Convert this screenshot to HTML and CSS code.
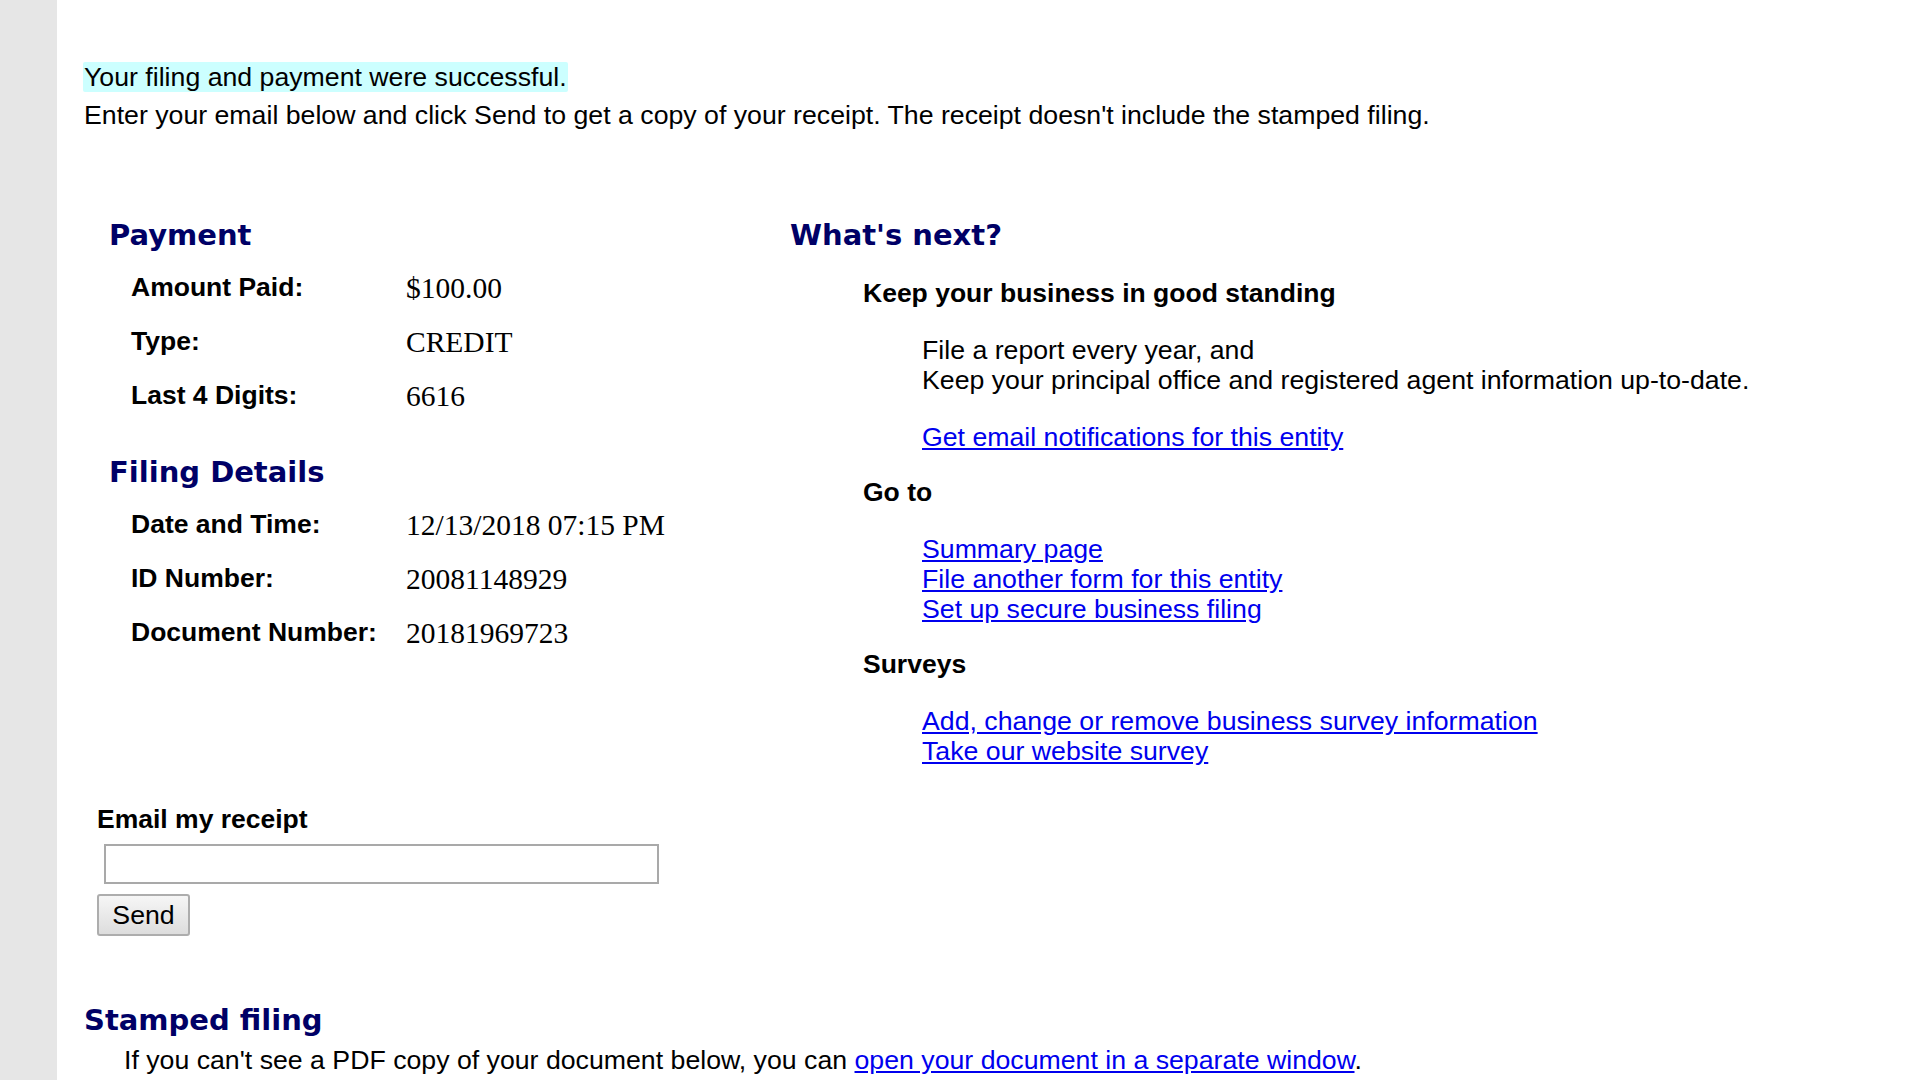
FILE: index.html
```html
<!DOCTYPE html>
<html lang="en">
<head>
<meta charset="utf-8">
<title>Filing Confirmation</title>
<link rel="stylesheet" href="styles.css">
</head>
<body>
<div class="page">
  <aside class="sidebar"></aside>
  <main class="main">
    <p class="intro-line"><span class="success">Your filing and payment were successful.</span></p>
    <p class="intro-line intro-second">Enter your email below and click Send to get a copy of your receipt. The receipt doesn't include the stamped filing.</p>

    <div class="columns">
      <section class="left-col">
        <h2 class="heading">Payment</h2>
        <dl class="details">
          <dt>Amount Paid:</dt><dd>$100.00</dd>
          <dt>Type:</dt><dd>CREDIT</dd>
          <dt>Last 4 Digits:</dt><dd>6616</dd>
        </dl>
        <h2 class="heading heading-second">Filing Details</h2>
        <dl class="details">
          <dt>Date and Time:</dt><dd>12/13/2018 07:15 PM</dd>
          <dt>ID Number:</dt><dd>20081148929</dd>
          <dt>Document Number:</dt><dd>20181969723</dd>
        </dl>
      </section>

      <section class="right-col">
        <h2 class="heading">What's next?</h2>
        <h3 class="subhead">Keep your business in good standing</h3>
        <p class="indent">File a report every year, and<br>Keep your principal office and registered agent information up-to-date.</p>
        <p class="indent"><a href="#">Get email notifications for this entity</a></p>
        <h3 class="subhead">Go to</h3>
        <p class="indent"><a href="#">Summary page</a><br><a href="#">File another form for this entity</a><br><a href="#">Set up secure business filing</a></p>
        <h3 class="subhead">Surveys</h3>
        <p class="indent"><a href="#">Add, change or remove business survey information</a><br><a href="#">Take our website survey</a></p>
      </section>
    </div>

    <form class="email-form" onsubmit="return false;">
      <label class="email-label" for="email">Email my receipt</label>
      <input class="email-input" id="email" type="text">
      <button class="send-btn" type="button">Send</button>
    </form>

    <h2 class="heading stamped">Stamped filing</h2>
    <p class="pdf-note">If you can't see a PDF copy of your document below, you can <a href="#">open your document in a separate window</a>.</p>
  </main>
</div>
</body>
</html>
```

FILE: styles.css
```css
html, body {
  margin: 0;
  padding: 0;
  background: #ffffff;
}

body {
  font-family: "Liberation Sans", Arial, sans-serif;
  font-size: 26.7px;
  line-height: 30px;
  color: #000000;
}

.page {
  display: flex;
  min-height: 1080px;
}

.sidebar {
  width: 57px;
  flex: 0 0 57px;
  background: #e6e6e6;
}

.main {
  flex: 1;
  padding-left: 27px;
}

.intro-line {
  margin: 0;
}

.intro-line:first-child {
  margin-top: 62px;
}

.intro-second {
  margin-top: 8px;
}

.success {
  background: #ccffff;
  border-radius: 2px;
  padding: 0 1px;
  margin-left: -1px;
}

.columns {
  display: grid;
  grid-template-columns: 706px 1fr;
  margin-top: 87px;
}

.heading {
  font-family: "DejaVu Sans", Verdana, sans-serif;
  font-weight: bold;
  font-size: 29px;
  line-height: 36px;
  color: #000066;
  margin: 0;
}

.left-col {
  padding-left: 25px;
}

.heading-second {
  margin-top: 32px;
}

.details {
  display: grid;
  grid-template-columns: 275px 1fr;
  grid-auto-rows: 54px;
  align-items: center;
  margin: 7px 0 0 22px;
}

.details dt {
  font-weight: bold;
  font-size: 26.5px;
}

.details dd {
  margin: 0;
  font-family: "Liberation Serif", "Times New Roman", serif;
  font-size: 29.5px;
  padding-top: 2px;
}

.subhead {
  font-size: 26.5px;
  line-height: 30px;
  font-weight: bold;
  margin: 25px 0 0 73px;
}

.indent {
  margin: 27px 0 0 132px;
}

a {
  color: #0000ee;
  text-decoration: underline;
}

.email-form {
  display: flex;
  flex-direction: column;
  align-items: flex-start;
  margin-top: 38px;
  padding-left: 13px;
}

.email-label {
  font-weight: bold;
  font-size: 26.5px;
  line-height: 30px;
}

.email-input {
  box-sizing: border-box;
  width: 555px;
  height: 40px;
  margin: 10px 0 0 7px;
  border: 2px solid #a9a9a9;
  background: #ffffff;
  font-size: 20px;
}

.send-btn {
  box-sizing: border-box;
  width: 93px;
  height: 42px;
  margin-top: 10px;
  padding: 0;
  font-family: "Liberation Sans", Arial, sans-serif;
  font-size: 26.7px;
  color: #000000;
  background: linear-gradient(#f6f6f6, #dddddd);
  border: 2px solid #adadad;
  border-radius: 3px;
}

.stamped {
  margin-top: 66px;
}

.pdf-note {
  margin: 7px 0 0 40px;
}
```
